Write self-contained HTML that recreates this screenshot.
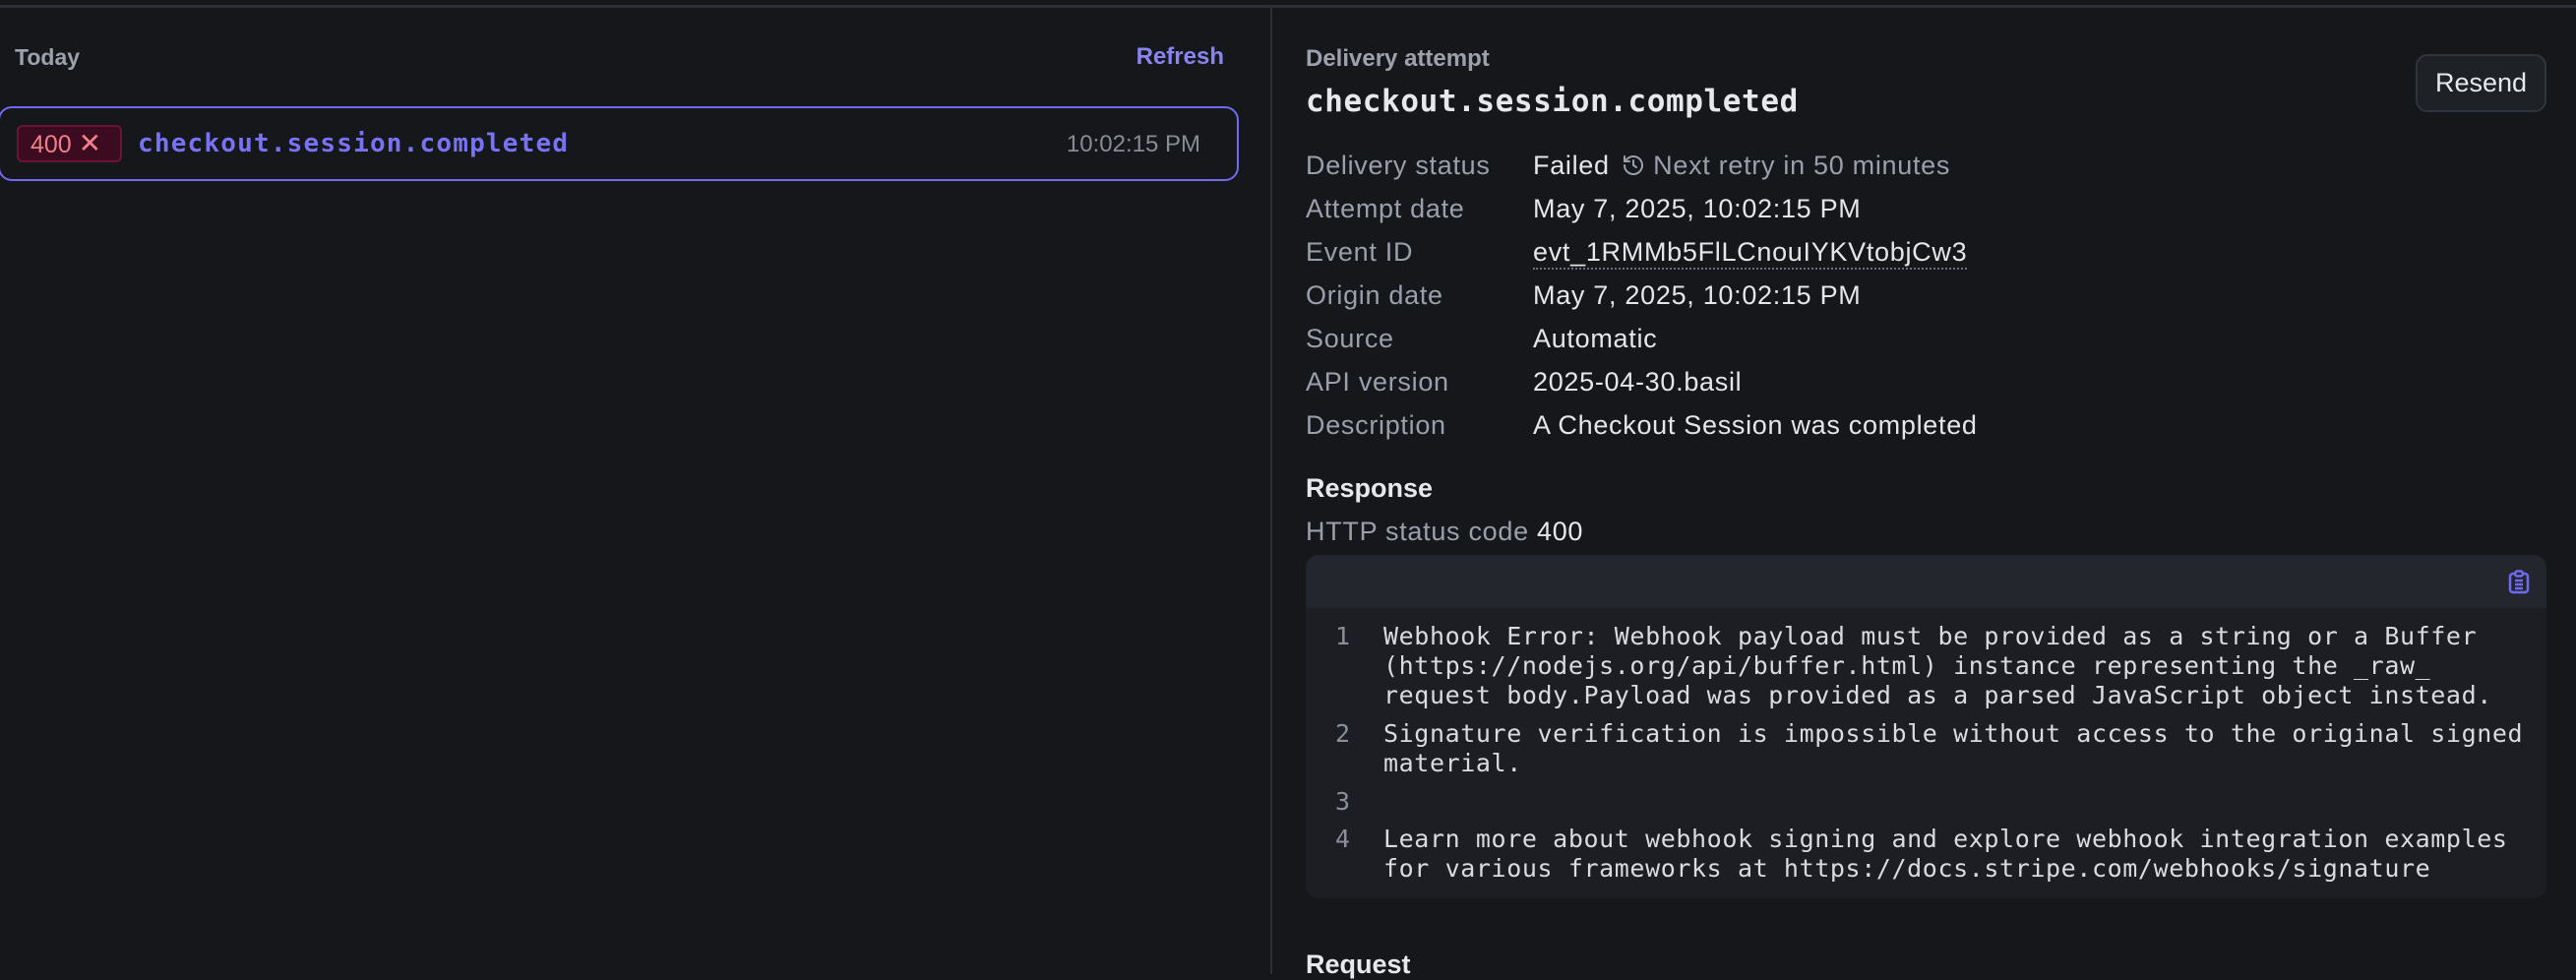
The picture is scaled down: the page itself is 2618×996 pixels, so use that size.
<!DOCTYPE html>
<html><head><style>
*{margin:0;padding:0;box-sizing:border-box}
body{width:2618px;height:990px;background:#16171b;overflow:hidden;position:relative;font-family:"Liberation Sans",sans-serif}
.a{position:absolute;white-space:nowrap}
.mono{font-family:"DejaVu Sans Mono","Liberation Mono",monospace}
.lab{color:#9aa0ab;font-size:27px;letter-spacing:0.7px}
.val{color:#e4e6ea;font-size:27px;letter-spacing:0.7px}
.code{font-size:25px;line-height:30px;letter-spacing:0.6px}
</style></head><body>
<div class="a" style="left:0;top:5px;width:2618px;height:3px;background:#2b2f36"></div>
<div class="a" style="left:1291px;top:8px;width:2px;height:982px;background:#2b2f36"></div>

<div class="a" style="left:15px;top:45px;font-size:23px;font-weight:bold;color:#9ca1ab">Today</div>
<div class="a" style="right:1374px;top:44px;font-size:24px;font-weight:bold;color:#8a84f2">Refresh</div>

<div class="a" style="left:-2px;top:108px;width:1261px;height:76px;border:2px solid #6f6af0;border-radius:14px"></div>
<div class="a" style="left:17px;top:127px;width:107px;height:38px;background:#3d0b1f;border:2px solid #6a1632;border-radius:6px;color:#f07f8c;font-size:25px;line-height:34px;padding-left:12px">400 <span style="font-size:28px">✕</span></div>
<div class="a mono" style="left:140px;top:128px;font-size:26px;font-weight:bold;color:#7872f4;line-height:36px;letter-spacing:1.2px">checkout.session.completed</div>
<div class="a" style="right:1398px;top:133px;font-size:24px;color:#878b95">10:02:15 PM</div>

<div class="a" style="left:1327px;top:46px;font-size:24px;font-weight:bold;color:#9ca1ab">Delivery attempt</div>
<div class="a mono" style="left:1327px;top:85px;font-size:31px;font-weight:bold;color:#e6e8ec;letter-spacing:0.6px">checkout.session.completed</div>
<div class="a" style="left:2455px;top:55px;width:133px;height:59px;background:#1e2126;border:2px solid #30343b;border-radius:12px;color:#e6e8ec;font-size:27px;line-height:55px;text-align:center">Resend</div>

<div class="a lab" style="left:1327px;top:153px">Delivery status</div>
<div class="a val" style="left:1558px;top:153px">Failed <span style="color:#9aa0ab">
<svg width="24" height="24" viewBox="0 0 24 24" style="vertical-align:-3px;margin-left:4px" fill="none" stroke="#9aa0ab" stroke-width="2" stroke-linecap="round"><path d="M3 12a9 9 0 1 0 3-6.7L3 8M3 3v5h5M12 7v5l3 2"/></svg> Next retry in 50 minutes</span></div>
<div class="a lab" style="left:1327px;top:197px">Attempt date</div>
<div class="a val" style="left:1558px;top:197px">May 7, 2025, 10:02:15 PM</div>
<div class="a lab" style="left:1327px;top:241px">Event ID</div>
<div class="a val" style="left:1558px;top:241px;border-bottom:2px dotted #6b707a;line-height:31px">evt_1RMMb5FlLCnouIYKVtobjCw3</div>
<div class="a lab" style="left:1327px;top:285px">Origin date</div>
<div class="a val" style="left:1558px;top:285px">May 7, 2025, 10:02:15 PM</div>
<div class="a lab" style="left:1327px;top:329px">Source</div>
<div class="a val" style="left:1558px;top:329px">Automatic</div>
<div class="a lab" style="left:1327px;top:373px">API version</div>
<div class="a val" style="left:1558px;top:373px">2025-04-30.basil</div>
<div class="a lab" style="left:1327px;top:417px">Description</div>
<div class="a val" style="left:1558px;top:417px">A Checkout Session was completed</div>

<div class="a" style="left:1327px;top:481px;font-size:27px;font-weight:bold;color:#e6e8ec">Response</div>
<div class="a lab" style="left:1327px;top:525px">HTTP status code <span style="color:#e6e8ec">400</span></div>

<div class="a" style="left:1327px;top:564px;width:1261px;height:349px;background:#1c1e23;border-radius:13px;overflow:hidden">
<div style="height:54px;background:#23262d"></div>
</div>
<svg class="a" style="left:2549px;top:579px" width="22" height="25" viewBox="0 0 22 25" fill="none" stroke="#6f6af0" stroke-width="2.5" stroke-linejoin="round"><rect x="2" y="4" width="18" height="19" rx="3"/><rect x="7" y="1.5" width="8" height="5" rx="2.5" fill="#23262d"/><path d="M7 11h8M7 15h8M7 19h8"/></svg>

<div class="a mono code" style="left:1357px;top:632px;color:#8a8f99">1</div>
<div class="a mono code" style="left:1406px;top:632px;color:#d8dbe0">Webhook Error: Webhook payload must be provided as a string or a Buffer<br>(https://nodejs.org/api/buffer.html) instance representing the _raw_<br>request body.Payload was provided as a parsed JavaScript object instead.</div>
<div class="a mono code" style="left:1357px;top:731px;color:#8a8f99">2</div>
<div class="a mono code" style="left:1406px;top:731px;color:#d8dbe0">Signature verification is impossible without access to the original signed<br>material.</div>
<div class="a mono code" style="left:1357px;top:800px;color:#8a8f99">3</div>
<div class="a mono code" style="left:1357px;top:838px;color:#8a8f99">4</div>
<div class="a mono code" style="left:1406px;top:838px;color:#d8dbe0">Learn more about webhook signing and explore webhook integration examples<br>for various frameworks at https://docs.stripe.com/webhooks/signature</div>

<div class="a" style="left:1327px;top:965px;font-size:27px;font-weight:bold;color:#e6e8ec">Request</div>
</body></html>
